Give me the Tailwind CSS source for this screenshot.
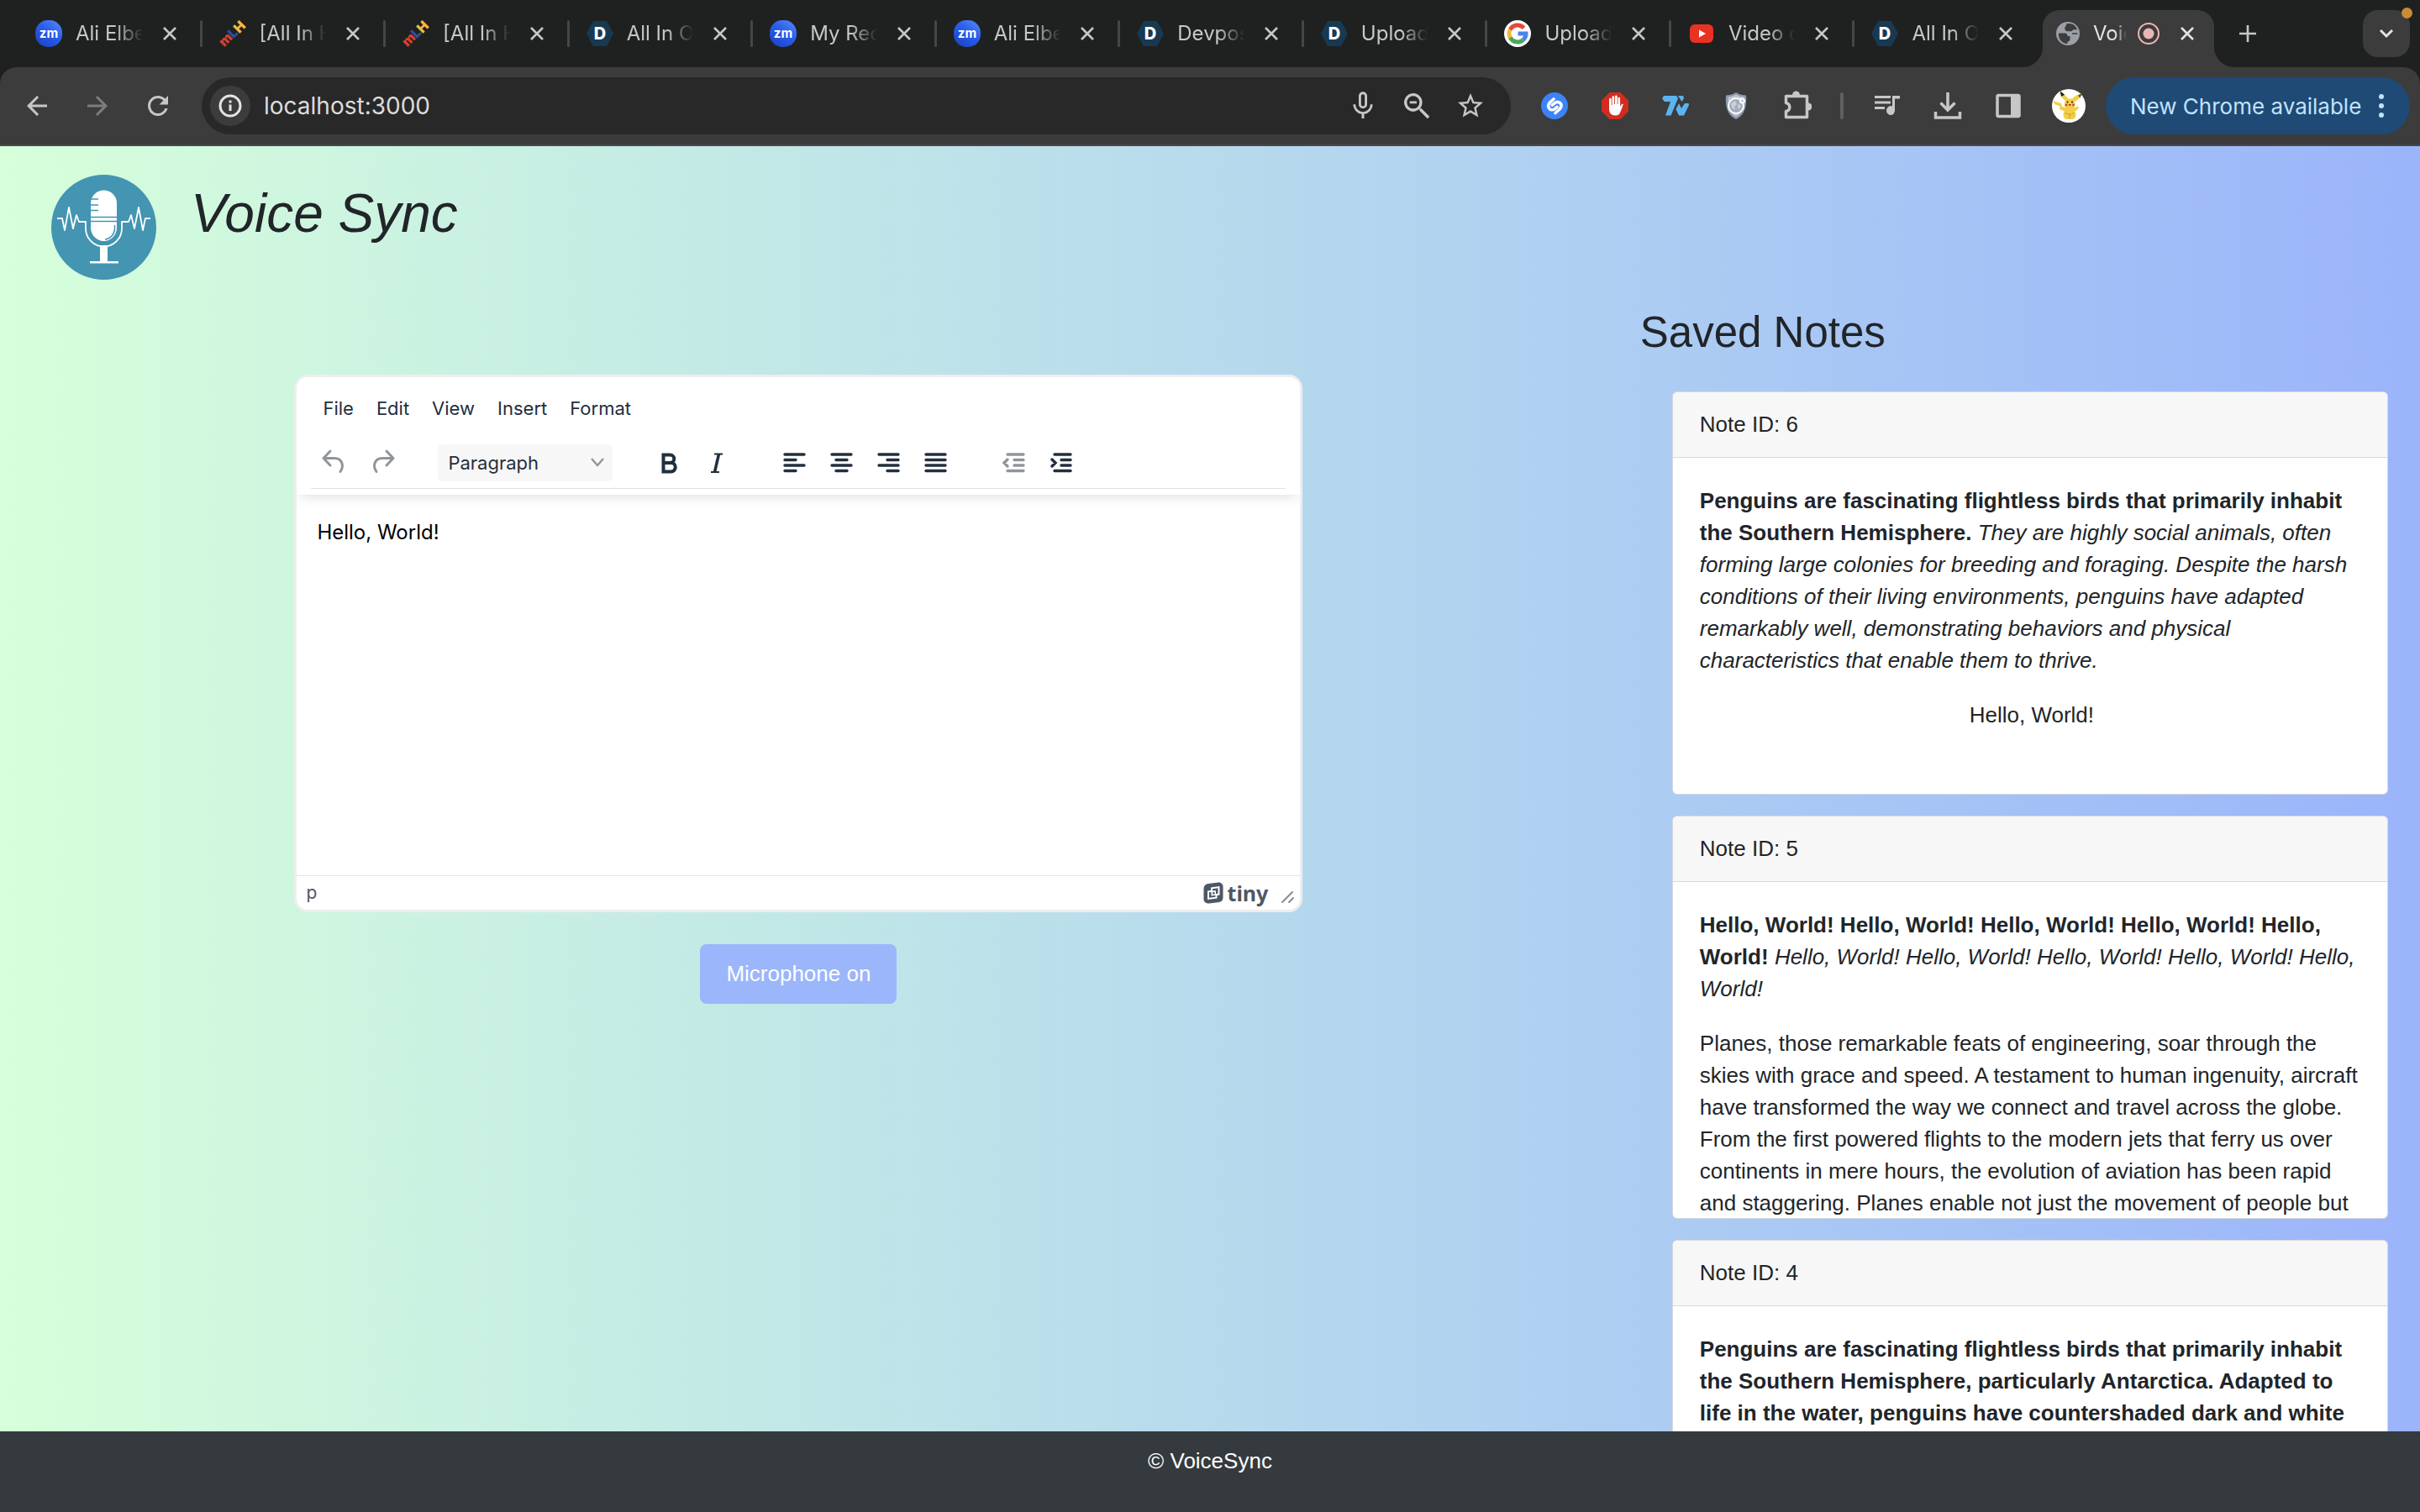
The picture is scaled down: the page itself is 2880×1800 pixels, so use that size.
<!DOCTYPE html>
<html lang="en">
<head>
  <meta charset="UTF-8" />
  <meta name="viewport" content="width=device-width, initial-scale=1.0" />
  <title>Voice Sync</title>
  <script src="https://cdn.jsdelivr.net/npm/@tailwindcss/browser@4"></script>
</head>
<body class="h-screen flex flex-col overflow-hidden bg-[#1f2120] font-['Liberation_Sans',Arial,sans-serif] text-[#212529]">

  <!-- shared icons -->
  <svg class="absolute size-0" aria-hidden="true">
    <defs>
      <linearGradient id="zmFill" x1="1" y1="0" x2="0.3" y2="1">
        <stop offset="0" stop-color="#5b8df2" /><stop offset="0.5" stop-color="#2a5cf0" /><stop offset="1" stop-color="#1d47c4" />
      </linearGradient>
    </defs>
    <symbol id="i-zm" viewBox="0 0 32 32">
      <rect width="32" height="32" rx="15" fill="url(#zmFill)" />
      <text x="16" y="21" text-anchor="middle" font-family="Inter, sans-serif" font-weight="700" font-size="15" fill="#fff">zm</text>
    </symbol>
    <symbol id="i-mlh" viewBox="0 0 32 32">
      <g font-family="Inter, sans-serif" font-weight="900" font-size="16" text-anchor="middle">
        <text transform="translate(11 27) rotate(-45)" fill="#d8402f">m</text>
        <text transform="translate(20 19) rotate(-45)" fill="#2c519c">L</text>
        <text transform="translate(28 12) rotate(-45)" fill="#f2bb3e">H</text>
      </g>
    </symbol>
    <symbol id="i-dev" viewBox="0 0 32 32">
      <path d="M8 1h16l8 15-8 15H8L0 16z" fill="#173a52" />
      <text x="16" y="23" text-anchor="middle" font-family="Inter, sans-serif" font-weight="800" font-size="20" fill="#fff">D</text>
    </symbol>
    <symbol id="i-google" viewBox="0 0 32 32">
      <circle cx="16" cy="16" r="16" fill="#fff" />
      <g fill="none" stroke-width="5">
        <path d="M23.500 9.300A10 10 0 0 0 7.200 11.300" stroke="#de4b3d" />
        <path d="M7.200 11.300a10 10 0 0 0 0 9.400" stroke="#f3b93a" />
        <path d="M7.200 20.700a10 10 0 0 0 15.600 2.600" stroke="#4fa856" />
        <path d="M16.500 16H26a10 10 0 0 1-3.200 7.400" stroke="#4a83ec" />
      </g>
    </symbol>
    <symbol id="i-yt" viewBox="0 0 32 32">
      <rect x="2" y="5" width="28" height="22" rx="6" fill="#ea3223" />
      <path d="M13 11.500l8 4.500-8 4.500z" fill="#fff" />
    </symbol>
    <symbol id="i-close" viewBox="0 0 24 24">
      <path d="M5 5l14 14M19 5L5 19" fill="none" stroke="currentColor" stroke-width="2.600" />
    </symbol>
  </svg>

  <!-- tab strip -->
  <div class="h-20 shrink-0 flex items-center pl-[22px] font-[Inter,sans-serif]">
    <div id="tabs" class="flex-1 min-w-0 flex items-center"></div>
    <div class="relative w-[204px] h-[68px] mt-3 ml-[5px] pb-3 pl-4 pr-5 shrink-0 flex items-center bg-[#3c3c3c] rounded-t-[20px] text-[#e3e3e3]">
      <svg class="absolute -left-6 bottom-0 size-6" viewBox="0 0 24 24"><path d="M24 0v24H0A24 24 0 0 0 24 0z" fill="#3c3c3c" /></svg>
      <svg class="absolute -right-6 bottom-0 size-6" viewBox="0 0 24 24"><path d="M0 0v24h24A24 24 0 0 1 0 0z" fill="#3c3c3c" /></svg>
      <svg class="size-7 shrink-0" viewBox="0 0 28 28">
        <circle cx="14" cy="14" r="14" fill="#9aa0a6" />
        <path d="M3 13.500h7c2.500 0 3.500 1.500 3.500 3.500h3v3.500c0 2-1 3-3 3v2.500C7 26 2 20 3 13.500z" fill="#3c3c3c" />
        <path d="M13 3c5-1 9 1.500 11 5.500h-3.500c-1.500 0-1.500 2-3 2H14c-2 0-3-1-3-3s2-2 2-4.500zM19 14h6.500" fill="#3c3c3c" stroke="#3c3c3c" stroke-width="1.500" />
      </svg>
      <span class="ml-4 flex-1 overflow-hidden whitespace-nowrap text-[24px] [mask-image:linear-gradient(to_right,black_65%,transparent)]">Voice</span>
      <svg class="ml-3 size-7 shrink-0" viewBox="0 0 28 28">
        <circle cx="14" cy="14" r="12" fill="none" stroke="#eab6b3" stroke-width="2" />
        <circle cx="14" cy="14" r="6.500" fill="#eab6b3" />
      </svg>
      <button class="ml-5 shrink-0" aria-label="Close tab"><svg class="size-6"><use href="#i-close" /></svg></button>
    </div>
    <div class="w-[245px] shrink-0 flex items-center justify-between pl-6 pr-3 text-[#c7c7c7]">
      <button aria-label="New tab">
        <svg class="size-8" viewBox="0 0 32 32"><path d="M16 6v20M6 16h20" stroke="currentColor" stroke-width="2.600" /></svg>
      </button>
      <button class="relative size-14 rounded-[18px] bg-[#3c3c3c] flex items-center justify-center text-[#e3e3e3]" aria-label="Search tabs">
        <svg class="size-6" viewBox="0 0 24 24"><path d="M5 8l7 7 7-7" fill="none" stroke="currentColor" stroke-width="3" /></svg>
        <span class="absolute -top-[3px] -right-[3px] size-[13px] rounded-full bg-[#cd8a35]"></span>
      </button>
    </div>
  </div>

  <!-- toolbar -->
  <div class="h-[94px] shrink-0 flex items-center pl-2 pr-3 bg-[#3c3c3c] border-b-2 border-[#464849] rounded-t-[20px] text-[#c7c7c7] font-[Inter,sans-serif]">
    <button class="w-[72px] flex justify-center" aria-label="Back">
      <svg class="size-9" viewBox="0 0 24 24" fill="currentColor"><path d="M20 11H7.830l5.590-5.590L12 4l-8 8 8 8 1.410-1.410L7.830 13H20v-2z" /></svg>
    </button>
    <button class="w-[72px] flex justify-center text-[#7d7d7d]" aria-label="Forward">
      <svg class="size-9" viewBox="0 0 24 24" fill="currentColor"><path d="M12 4l-1.410 1.410L16.170 11H4v2h12.170l-5.580 5.590L12 20l8-8z" /></svg>
    </button>
    <button class="w-[72px] flex justify-center" aria-label="Reload">
      <svg class="size-9" viewBox="0 0 24 24" fill="currentColor"><path d="M17.650 6.350A7.950 7.950 0 0 0 12 4a8 8 0 1 0 7.730 10h-2.080A6 6 0 1 1 12 6c1.660 0 3.140.690 4.220 1.780L13 11h7V4z" /></svg>
    </button>
    <div class="ml-4 flex-1 h-[68px] rounded-full bg-[#282828] flex items-center pl-[10px] pr-[30px]">
      <span class="size-12 rounded-full bg-[#3c3c3c] flex items-center justify-center text-[#e3e3e3]">
        <svg class="size-8" viewBox="0 0 32 32"><circle cx="16" cy="16" r="12" fill="none" stroke="currentColor" stroke-width="3" /><path d="M16 14.500v7.500M16 9.500v3" stroke="currentColor" stroke-width="3" /></svg>
      </span>
      <label for="address" class="sr-only">Address</label>
      <input id="address" type="text" value="localhost:3000" class="ml-4 flex-1 min-w-0 bg-transparent outline-none text-[28px] text-[#dcdcdc]" />
      <button class="w-16 flex justify-center" aria-label="Voice search">
        <svg class="size-10" viewBox="0 0 24 24" fill="currentColor"><path d="M12 14a3 3 0 0 0 3-3V5a3 3 0 0 0-6 0v6a3 3 0 0 0 3 3zM10.700 5a1.300 1.300 0 0 1 2.600 0v6a1.300 1.300 0 0 1-2.600 0zM17.300 11a5.300 5.300 0 0 1-10.600 0H5a7 7 0 0 0 6.100 6.900V21h1.800v-3.100A7 7 0 0 0 19 11z" /></svg>
      </button>
      <button class="w-16 flex justify-center" aria-label="Zoom">
        <svg class="size-10" viewBox="0 0 24 24" fill="currentColor"><path d="M15.500 14h-.790l-.280-.270A6.500 6.500 0 1 0 13.730 14.430l.270.280v.790l5.700 5.690 1.490-1.490zM9.500 14a4.500 4.500 0 1 1 0-9 4.500 4.500 0 0 1 0 9zM7 8.700h5v1.600H7z" /></svg>
      </button>
      <button class="w-9 ml-[14px] flex justify-center" aria-label="Bookmark">
        <svg class="size-10" viewBox="0 0 24 24" fill="currentColor"><path d="M22 9.240l-7.190-.620L12 2 9.190 8.630 2 9.240l5.460 4.730L5.820 21 12 17.270 18.180 21l-1.630-7.030zM12 15.400l-3.760 2.270 1-4.280-3.320-2.880 4.380-.380L12 6.100l1.710 4.040 4.380.380-3.320 2.880 1 4.280z" /></svg>
      </button>
    </div>
    <div class="ml-4 flex items-center">
      <button class="w-[72px] flex justify-center" aria-label="Shazam">
        <svg class="size-8" viewBox="0 0 32 32"><circle cx="16" cy="16" r="16" fill="#3c83f6" /><g fill="none" stroke="#fff" stroke-width="3.600" stroke-linecap="round"><path d="M15 8l-4 3.500c-3 2.500-3 6-1 8s5 1.500 6.500 0l2.500-2.200" /><path d="M17 24.500l4-3.500c3.500-3 4-6.500 1.500-8.500s-5-1-6.500.300l-2.800 2.400" /></g></svg>
      </button>
      <button class="w-[72px] flex justify-center" aria-label="AdBlock">
        <svg class="size-8" viewBox="0 0 32 32"><path d="M9.500 0h13L32 9.500v13L22.500 32h-13L0 22.500v-13z" fill="#d12c1f" /><path d="M9 8a1.300 1.300 0 0 1 2.700 0v7h.800V5.500a1.300 1.300 0 0 1 2.700 0V14h.800V4.800a1.300 1.300 0 0 1 2.700 0V14h.700V7a1.300 1.300 0 0 1 2.700 0v10l1.200-2c.6-1.200 2-1.700 2.400-.8-.800 3-2 6-3.200 8.800-1 3-3 4.500-6 4.500-5 0-7.500-3-7.500-8z" fill="#fff" /></svg>
      </button>
      <button class="w-[72px] flex justify-center" aria-label="7TV">
        <svg class="size-8" viewBox="0 0 32 32" fill="#5cb3f0"><path d="M2 4h15l2 3-8.500 20.500H4L10 11H3L0 7.500zM19 4h6l1 3-2.500 4zM20 13l3 6 4-6h4.500l.500 2-6 12.500h-6L16.500 20z" /></svg>
      </button>
      <button class="w-[72px] flex justify-center" aria-label="Privacy shield">
        <svg class="size-8" viewBox="0 0 32 32"><path d="M16 0c4 3 8 3 12 3.500C29 15 27 27 16 32 5 27 3 15 4 3.500 8 3 12 3 16 0z" fill="#8e9ab0" /><path d="M16 2.500c3 2 6 2.500 9.500 3C26 16 24 25 16 29 8 25 6 16 6.500 5.500 10 5 13 4.500 16 2.500z" fill="#bcc4d2" /><circle cx="16" cy="16" r="9" fill="#a3adbd" stroke="#fff" stroke-width="2" /><path d="M10 13l5-3 2 4-3 3 1 4-4-3zM18 14l4 1-2 5-2-2z" fill="#c9d0db" /><circle cx="23.500" cy="10" r="2.500" fill="#bcc4d2" stroke="#fff" stroke-width="2" /></svg>
      </button>
      <button class="w-[72px] flex justify-center" aria-label="Extensions">
        <svg class="size-9" viewBox="0 0 36 36"><path d="M5.500 6.500h25v25h-25v-7c5.500-1 6-8.500 0-10z" fill="none" stroke="currentColor" stroke-width="3.500" stroke-linejoin="round" /><path d="M13 5a4.500 4.500 0 0 1 9 0zM32 14.500a4.500 4.500 0 0 1 0 9z" fill="currentColor" /></svg>
      </button>
      <span class="mx-4 w-1 h-8 rounded-full bg-[#5f5f5f]"></span>
      <button class="w-[72px] flex justify-center" aria-label="Media">
        <svg class="size-8" viewBox="0 0 32 32" fill="currentColor"><path d="M1 4h19v3H1zM1 10.500h19v3H1zM1 17h12v3H1zM22 4h9v3.500h-6V21a5 5.500 0 1 1-3-4.500z" /></svg>
      </button>
      <button class="w-[72px] flex justify-center" aria-label="Downloads">
        <svg class="size-9" viewBox="0 0 36 36" fill="none" stroke="currentColor" stroke-width="3.500"><path d="M18 2v20M9.500 14.500L18 23l8.500-8.500M3.500 25v7h29v-7" /></svg>
      </button>
      <button class="w-[72px] flex justify-center" aria-label="Side panel">
        <svg class="size-8" viewBox="0 0 32 32"><rect x="3" y="3.500" width="26" height="25" rx="1.500" fill="none" stroke="currentColor" stroke-width="3.500" /><path d="M19 3h10v26H19z" fill="currentColor" /></svg>
      </button>
      <button class="w-[72px] flex justify-center" aria-label="Profile">
        <svg class="size-10" viewBox="0 0 40 40">
          <circle cx="20" cy="20" r="20" fill="#fff" />
          <path d="M1.500 14l9.500 3 1 4 5 2-1 4-7-3 .5-3.500L3 18z" fill="#f2cf45" />
          <path d="M16 14C12 11 9.500 7 10 3c4 2 7 5 9 8.500h5c3-3 7-5.500 11.500-6C34 10 31 13.500 27 15c1 4 0 6-1 7.500 3-2 5-1 6-2 0 3-2 5-5 6 3 4 1 9-2 9.500h-8c-3-1-5-5-2-10-2-1-4-3-4-5 1 0 3 .5 5 1-1.500-2-1.500-5 0-8z" fill="#f2cf45" />
          <path d="M10 3c2 1 3.500 2.200 5 3.800L11.500 9C10.300 7 9.800 5 10 3z" fill="#29231f" />
          <path d="M35.500 5.500c-.5 2-1.300 3.600-2.300 5l-2.200-3z" fill="#6b4f22" />
          <circle cx="18.500" cy="15.500" r="1.100" fill="#29231f" /><circle cx="24" cy="15.500" r="1.100" fill="#29231f" />
          <circle cx="17" cy="19" r="1.400" fill="#d8402f" /><circle cx="25.500" cy="19" r="1.400" fill="#d8402f" />
          <path d="M19.500 18h3.500l-1.700 2.600z" fill="#a3352a" />
          <path d="M16 28c2 3 8 3 10 0M21 31v4" fill="none" stroke="#c99d29" stroke-width="1" />
        </svg>
      </button>
    </div>
    <button class="ml-2 h-[68px] w-[362px] pl-[29px] pr-6 rounded-full bg-[#1f4a75] text-[#c2e2ff] flex items-center justify-between text-[26px] whitespace-nowrap">
      New Chrome available
      <svg class="w-5 h-8" viewBox="0 0 20 32" fill="currentColor"><circle cx="10" cy="5" r="3" /><circle cx="10" cy="16" r="3" /><circle cx="10" cy="27" r="3" /></svg>
    </button>
  </div>

  <!-- page -->
  <div class="flex-1 min-h-0 flex flex-col bg-linear-to-r from-[#d6ffda] to-[#9bb4fa]">
    <header class="flex items-start pt-[34px] pl-[61px] gap-[41px]">
      <svg class="size-[125px]" viewBox="0 0 125 125">
        <circle cx="62.500" cy="62.500" r="62.500" fill="#4395b1" />
        <path d="M47 34a15.500 15.500 0 0 1 31 0v29a15.500 16 0 0 1-31 0z" fill="#fff" />
        <path d="M47 29h9M47 36h9M47 42.500h9M47 50.500h31M47 55.500h31" stroke="#4395b1" stroke-width="1.500" />
        <path d="M75.500 60v4a13 13 0 0 1-11.500 13" fill="none" stroke="#4395b1" stroke-width="1.500" />
        <path d="M7 52h6l3 14 5-27 5 25 4-16 3 8h8v8a21.500 21.500 0 0 0 43 0v-8h8l3-8 4 16 5-25 5 27 3-14h6" fill="none" stroke="#fff" stroke-width="1.800" stroke-linejoin="round" />
        <path d="M58 84h9v19h13v2.500H46V103h12z" fill="#fff" />
      </svg>
      <h1 class="pt-2 text-[64px] leading-[77px] italic">Voice Sync</h1>
    </header>

    <main class="flex-1 min-h-0 grid grid-cols-[66%_34%] overflow-hidden">
      <section class="pt-[113px] flex flex-col items-center">
        <div class="w-[1200px] max-w-full h-[640px] flex flex-col bg-white border-3 border-[#eeeeee] rounded-2xl overflow-hidden font-[Inter,sans-serif] text-[#222f3e]">
          <div class="relative h-[140px] shrink-0 flex flex-col bg-white px-[17px] shadow-[0_4px_16px_-4px_rgba(34,47,62,0.2)]">
            <nav class="h-[74px] px-[6px] flex items-center text-[22px]">
              <button class="px-2 mr-[11px]">File</button>
              <button class="px-2 mr-[11px]">Edit</button>
              <button class="px-2 mr-[11px]">View</button>
              <button class="px-2 mr-[11px]">Insert</button>
              <button class="px-2">Format</button>
            </nav>
            <div class="h-[59px] pb-[2px] flex items-center border-b border-[#e3e3e3]">
              <button class="w-14 flex justify-center text-[#90959c]" aria-label="Undo">
                <svg class="size-10" viewBox="0 0 40 40" fill="none" stroke="currentColor" stroke-width="3" stroke-linecap="round" stroke-linejoin="round"><path d="M15 6l-8 8.500 8 8.500M8 14.500h12c9 0 12 9 7 16" /></svg>
              </button>
              <button class="w-14 flex justify-center text-[#90959c]" aria-label="Redo">
                <svg class="size-10" viewBox="0 0 40 40" fill="none" stroke="currentColor" stroke-width="3" stroke-linecap="round" stroke-linejoin="round"><path d="M26 6l8 8.500-8 8.500M33 14.500H21c-9 0-12 9-7 16" /></svg>
              </button>
              <label for="block" class="sr-only">Block format</label>
              <div class="relative ml-[39px] w-52 h-11">
                <select id="block" class="appearance-none w-full h-full pl-3 rounded-md bg-[#f7f7f7] text-[22px]"><option>Paragraph</option></select>
                <svg class="absolute right-2 top-3 size-5 text-[#90959c] pointer-events-none" viewBox="0 0 20 20"><path d="M3 5l7 8 7-8" fill="none" stroke="currentColor" stroke-width="2.400" /></svg>
              </div>
              <button class="ml-10 w-14 flex justify-center" aria-label="Bold">
                <svg class="size-10" viewBox="0 0 40 40"><path d="M12.500 10.500h8a4.500 4.500 0 0 1 0 9.500h-8zM12.500 20h9a5 5 0 0 1 0 10.500h-9z" fill="none" stroke="currentColor" stroke-width="4" /></svg>
              </button>
              <button class="w-14 flex justify-center" aria-label="Italic">
                <svg class="size-10" viewBox="0 0 40 40"><path d="M17 9.500h10M13 31h10" stroke="currentColor" stroke-width="2" /><path d="M22.500 9.500L17.500 31" stroke="currentColor" stroke-width="3.500" /></svg>
              </button>
              <button class="ml-9 w-14 flex justify-center" aria-label="Align left">
                <svg class="size-10" viewBox="0 0 40 40" stroke="currentColor" stroke-width="3.400" stroke-linecap="round"><path d="M9 10h23M9 16.500h13M9 23h23M9 29.500h13" /></svg>
              </button>
              <button class="w-14 flex justify-center" aria-label="Align center">
                <svg class="size-10" viewBox="0 0 40 40" stroke="currentColor" stroke-width="3.400" stroke-linecap="round"><path d="M9 10h23M14 16.500h13M9 23h23M14 29.500h13" /></svg>
              </button>
              <button class="w-14 flex justify-center" aria-label="Align right">
                <svg class="size-10" viewBox="0 0 40 40" stroke="currentColor" stroke-width="3.400" stroke-linecap="round"><path d="M9 10h23M19 16.500h13M9 23h23M19 29.500h13" /></svg>
              </button>
              <button class="w-14 flex justify-center" aria-label="Justify">
                <svg class="size-10" viewBox="0 0 40 40" stroke="currentColor" stroke-width="3.400" stroke-linecap="round"><path d="M9 10h23M9 16.500h23M9 23h23M9 29.500h23" /></svg>
              </button>
              <button class="ml-[38px] w-14 flex justify-center text-[#90959c]" aria-label="Decrease indent">
                <svg class="size-10" viewBox="0 0 40 40" fill="none" stroke="currentColor" stroke-width="3.400" stroke-linecap="round"><path d="M12 10h19M20 16.500h11M20 23h11M12 29.500h19M12 16l-4 4 4 4" /></svg>
              </button>
              <button class="w-14 flex justify-center" aria-label="Increase indent">
                <svg class="size-10" viewBox="0 0 40 40" fill="none" stroke="currentColor" stroke-width="3.400" stroke-linecap="round"><path d="M12 10h19M20 16.500h11M20 23h11M12 29.500h19M9 16l4 4-4 4" /></svg>
              </button>
            </div>
          </div>
          <div class="flex-1 px-6 pt-[27px] text-[24px] leading-9 text-black" contenteditable="true"><p>Hello, World!</p></div>
          <div class="h-[41px] shrink-0 flex items-center border-t border-[#e3e3e3] pl-[11px] pr-[6px] text-[#4d5766]">
            <span class="text-[21px]">p</span>
            <a href="#" class="ml-auto flex items-center gap-1" aria-label="Tiny">
              <svg class="size-[26px]" viewBox="0 0 26 26">
                <path d="M7 2l12-1.500c3 0 5.500 2 5.500 5v13c0 3-1.500 5-4.500 5.500l-12 1.500c-4 0-6.500-2-6.500-5V8c0-3 2-5.500 5.500-6z" fill="#4d5766" />
                <path d="M10 6.500l10.500-1.500v10.500l-3 .5v3.500L6 21V10.500l4-.5z" fill="#fff" />
                <path d="M12 8.300l6.500-1v6.500l-2.500.300V10l-4 .5zM8 12.300l2.500-.3v4.500l5-.7v2L8 18.800zM12.200 12.300l2.300-.3v2.500l-2.300.3z" fill="#4d5766" />
              </svg>
              <span class="text-[25px] leading-8 font-bold font-['Noto_Sans',sans-serif]">tiny</span>
            </a>
            <svg class="ml-[14px] mt-2 size-[18px] text-[#868c96]" viewBox="0 0 18 18"><path d="M3 16L15 4M11 16l5-5" stroke="currentColor" stroke-width="2" stroke-linecap="round" /></svg>
          </div>
        </div>
        <button class="mt-[38px] h-[71px] px-[31px] rounded-lg bg-[#9bb6fa] text-white text-[26px]">Microphone on</button>
      </section>

      <section class="pt-8 pl-[51px] pr-[38px]">
        <h2 class="text-[51px] leading-[62px]">Saved Notes</h2>
        <div class="mt-[39px] pl-[38px] flex flex-col gap-[25px] text-[26px] leading-[38px]">
          <article class="h-[480px] bg-white border border-[#d5d8de] rounded-md overflow-hidden">
            <h3 class="px-8 pt-[19px] pb-5 bg-[#f7f7f7] border-b border-[#d8d8d8]">Note ID: 6</h3>
            <div class="pt-8 pl-8 pr-7 flex flex-col gap-[27px]">
              <p><strong>Penguins are fascinating flightless birds that primarily inhabit the Southern Hemisphere.</strong> <em>They are highly social animals, often forming large colonies for breeding and foraging. Despite the harsh conditions of their living environments, penguins have adapted remarkably well, demonstrating behaviors and physical characteristics that enable them to thrive.</em></p>
              <p class="text-center">Hello, World!</p>
            </div>
          </article>
          <article class="h-[480px] bg-white border border-[#d5d8de] rounded-md overflow-hidden">
            <h3 class="px-8 pt-[19px] pb-5 bg-[#f7f7f7] border-b border-[#d8d8d8]">Note ID: 5</h3>
            <div class="pt-8 pl-8 pr-7 flex flex-col gap-[27px]">
              <p><strong>Hello, World! Hello, World! Hello, World! Hello, World! Hello, World!</strong> <em>Hello, World! Hello, World! Hello, World! Hello, World! Hello, World!</em></p>
              <p>Planes, those remarkable feats of engineering, soar through the skies with grace and speed. A testament to human ingenuity, aircraft have transformed the way we connect and travel across the globe. From the first powered flights to the modern jets that ferry us over continents in mere hours, the evolution of aviation has been rapid and staggering. Planes enable not just the movement of people but</p>
            </div>
          </article>
          <article class="h-[480px] bg-white border border-[#d5d8de] rounded-md overflow-hidden">
            <h3 class="px-8 pt-[19px] pb-5 bg-[#f7f7f7] border-b border-[#d8d8d8]">Note ID: 4</h3>
            <div class="pt-8 pl-8 pr-7">
              <p><strong>Penguins are fascinating flightless birds that primarily inhabit the Southern Hemisphere, particularly Antarctica. Adapted to life in the water, penguins have countershaded dark and white</strong></p>
            </div>
          </article>
        </div>
      </section>
    </main>

    <footer class="h-24 shrink-0 pt-4 bg-[#353a3e] text-white text-center text-[26px] leading-[38px]">&copy; VoiceSync</footer>
  </div>

  <script>
    const tabs = [
      { icon: "i-zm", title: "Ali Elbe" },
      { icon: "i-mlh", title: "[All In H" },
      { icon: "i-mlh", title: "[All In H" },
      { icon: "i-dev", title: "All In O" },
      { icon: "i-zm", title: "My Rec" },
      { icon: "i-zm", title: "Ali Elbe" },
      { icon: "i-dev", title: "Devpos" },
      { icon: "i-dev", title: "Upload" },
      { icon: "i-google", title: "Upload" },
      { icon: "i-yt", title: "Video c" },
      { icon: "i-dev", title: "All In O" }
    ];

    document.getElementById("tabs").innerHTML = tabs.map((tab, i) => `
      <div class="flex-1 min-w-0 flex items-center pl-5 text-[#c7c7c7]">
        <svg class="size-8 shrink-0"><use href="#${tab.icon}" /></svg>
        <span class="ml-4 flex-1 overflow-hidden whitespace-nowrap text-[24px] [mask-image:linear-gradient(to_right,black_60%,transparent)]">${tab.title}</span>
        <button class="ml-5 shrink-0" aria-label="Close tab"><svg class="size-6"><use href="#i-close" /></svg></button>
        <span class="ml-6 w-[3px] h-8 shrink-0 rounded-full ${i < tabs.length - 1 ? "bg-[#444746]" : "bg-transparent"}"></span>
      </div>
    `).join("");
  </script>
</body>
</html>
